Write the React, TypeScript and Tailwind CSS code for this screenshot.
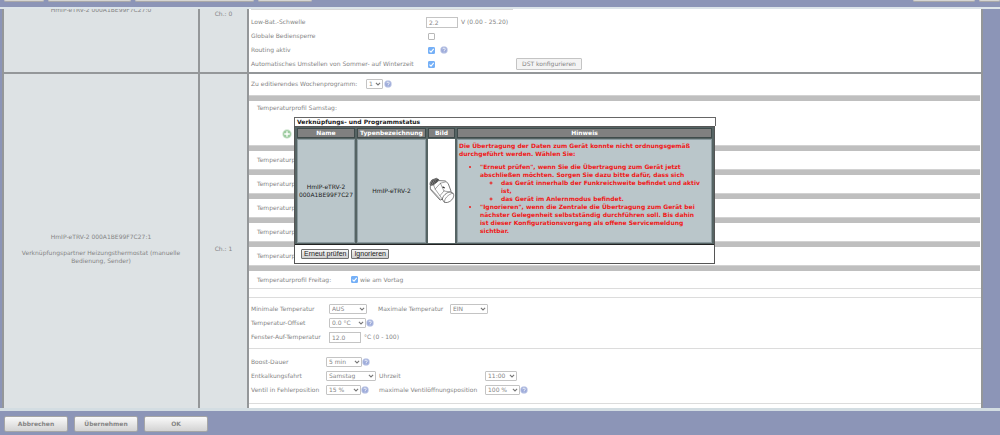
import type { ReactNode } from 'react';

function Help() {
  return (
    <svg viewBox="0 0 16 16" className="size-2 shrink-0" role="img" aria-label="Hilfe">
      <circle cx="8" cy="8" r="7.5" fill="#c3cbe8" />
      <circle cx="8" cy="8" r="5.8" fill="#9dabda" />
      <path d="M5.6 6.4a2.4 2.4 0 1 1 3.4 2.2c-.7.4-1 .7-1 1.4M8 11.4v1.4" fill="none" stroke="#fff" strokeWidth="1.7" />
    </svg>
  );
}

function Check({ id, on = false }: { id: string; on?: boolean }) {
  return (
    <span className="relative flex size-[7px] shrink-0">
      <input
        id={id}
        type="checkbox"
        defaultChecked={on}
        className="peer size-[7px] appearance-none rounded-[1px] border border-[#b8b8b8] bg-white checked:border-[#75b0f7] checked:bg-[#75b0f7]"
      />
      <svg viewBox="0 0 14 14" className="pointer-events-none absolute inset-0 hidden size-[7px] peer-checked:block" aria-hidden="true">
        <path d="M3 7.2l3 3 5.4-6.4" fill="none" stroke="#fff" strokeWidth="2.2" />
      </svg>
    </span>
  );
}

function Select({ id, label, value, width }: { id: string; label?: string; value: string; width: string }) {
  return (
    <span className={`relative flex shrink-0 ${width}`}>
      <select
        id={id}
        aria-label={label}
        defaultValue={value}
        className="h-[10px] w-full appearance-none rounded-[1px] border border-[#c4c4c4] bg-white pl-[2px] text-[6px] leading-[8px] text-[#858585]"
      >
        <option>{value}</option>
      </select>
      <svg viewBox="0 0 10 6" className="pointer-events-none absolute top-[3px] right-[2px] h-[4px] w-[6px]" aria-hidden="true">
        <path d="M1.5 1l3.5 3.5L8.5 1" fill="none" stroke="#777" strokeWidth="1.8" />
      </svg>
    </span>
  );
}

const inputStyle = 'h-[11px] w-8 shrink-0 border border-[#c4c4c4] bg-white pl-[2px] text-[6px] leading-[8px] text-[#858585]';

function Line({ children }: { children: ReactNode }) {
  return <div className="flex h-[14px] items-center">{children}</div>;
}

function Band() {
  return <div className="mr-px h-[6px] border-t border-[#d2d2d2] bg-[#bfbfbf]" />;
}

function Plus() {
  return (
    <button type="button" aria-label="Zeitabschnitt hinzufügen" className="flex">
      <svg viewBox="0 0 20 20" className="size-[10px]">
        <circle cx="10" cy="10" r="9.5" fill="#d3e6d3" />
        <circle cx="10" cy="10" r="7.6" fill="#9ccb9f" />
        <path d="M10 4.5v11M4.5 10h11" stroke="#fff" strokeWidth="2.6" />
      </svg>
    </button>
  );
}

const barButton =
  'h-4 w-16 rounded-[2px] border border-[#a6a6a6] bg-linear-to-b from-[#fafafa] to-[#d3d3d3] text-[6px] leading-[8px] font-bold text-[#858585]';
const topTab = 'h-[2px] rounded-b-[2px] border-b border-[#aaa9a9] bg-[#d6d6d3]';
const dialogButton =
  "h-[10px] rounded-[1px] border border-[#707070] bg-linear-to-b from-[#f4f4f4] to-[#cfcfcf] px-[2px] font-['Liberation_Sans',sans-serif] text-[7px] leading-[8px] text-[#222]";
const headCell = 'h-[10px] border border-[#3f4b4b] bg-[#808080] p-0 text-center font-bold text-white';
const bodyCell = 'border border-[#8b9a9f] bg-[#bac6ca] p-0 text-center';

function Dialog() {
  return (
    <section role="dialog" aria-labelledby="dlg-title" className="absolute top-[117px] left-[294px] w-[422px] text-[6px] leading-[8px] text-[#222]">
      <h2 id="dlg-title" className="border border-[#666] border-b-0 bg-white pl-[2px] font-bold">
        Verknüpfungs- und Programmstatus
      </h2>
      <div className="mr-px border border-[#555] bg-white">
        <table className="w-full table-fixed border-separate border-spacing-x-[2px] border-spacing-y-px border-b border-[#222] bg-[#566464]">
          <colgroup>
            <col className="w-[58px]" />
            <col className="w-[69px]" />
            <col className="w-[27px]" />
            <col />
          </colgroup>
          <thead>
            <tr>
              <th className={headCell}>Name</th>
              <th className={headCell}>Typenbezeichnung</th>
              <th className={headCell}>Bild</th>
              <th className={headCell}>Hinweis</th>
            </tr>
          </thead>
          <tbody>
            <tr>
              <td className={bodyCell}>
                HmIP-eTRV-2
                <br />
                000A1BE99F7C27
              </td>
              <td className={bodyCell}>HmIP-eTRV-2</td>
              <td className="bg-white p-0">
                <svg viewBox="10 16 80 84" className="mx-auto h-7 w-[26px]" role="img" aria-label="Heizkörperthermostat">
                  <g fill="#fff" stroke="#444" strokeWidth="2.2" strokeLinejoin="round" strokeLinecap="round">
                    <path d="M14 32l5-8 14-5 8 5-4 8-14 10-9-3z" fill="#888" />
                    <path d="M17 36l6-11M22 38l7-14M28 36l6-13M33 32l4-10" stroke="#333" />
                    <path d="M15 41l9-2 16-13 20 1 9 8 9 24-6 6-21 18-7 3-29-32z" />
                    <path d="M24 39l5 13 22 31M29 52l16-18 16-4M45 34l11 24 19 3M56 58L44 72" fill="none" strokeWidth="1.5" />
                    <path d="M17 53l27 29" fill="none" strokeWidth="1.5" />
                    <path d="M51 82c2-10 13-20 24-21l8 3c6 5 3 17-6 24-6 5-14 7-19 5z" />
                    <path d="M58 92c-3-9 12-25 25-27" fill="none" strokeWidth="1.6" />
                    <path d="M53 46l4 2" stroke="#333" strokeWidth="4" />
                  </g>
                </svg>
              </td>
              <td className="border border-[#8b9a9f] bg-[#bac6ca] py-[2px] pr-[8px] pl-px text-left font-bold text-[#f01818]">
                <p>Die Übertragung der Daten zum Gerät konnte nicht ordnungsgemäß durchgeführt werden. Wählen Sie:</p>
                <ul className="my-[5px] list-disc pl-[21px]">
                  <li>
                    "Erneut prüfen", wenn Sie die Übertragung zum Gerät jetzt abschließen möchten. Sorgen Sie dazu bitte dafür, dass sich
                    <ul className="list-[circle] pl-[21px]">
                      <li>das Gerät innerhalb der Funkreichweite befindet und aktiv ist,</li>
                      <li>das Gerät im Anlernmodus befindet.</li>
                    </ul>
                  </li>
                  <li>
                    "Ignorieren", wenn die Zentrale die Übertragung zum Gerät bei nächster Gelegenheit selbstständig durchführen soll. Bis dahin ist
                    dieser Konfigurationsvorgang als offene Servicemeldung sichtbar.
                  </li>
                </ul>
              </td>
            </tr>
          </tbody>
        </table>
        <div className="flex gap-[2px] px-[6px] pt-[4px] pb-[4px]">
          <button type="button" className={dialogButton}>Erneut prüfen</button>
          <button type="button" className={dialogButton}>Ignorieren</button>
        </div>
      </div>
    </section>
  );
}

const columns = 'grid grid-cols-[196px_49px_1fr]';
const infoCell = 'flex flex-col justify-center border-r-2 border-[#949799] bg-[#dde2e4] text-center';
const profiles = [1, 2, 3, 4, 5];

export default function App() {
  return (
    <div className="relative flex h-screen flex-col overflow-hidden bg-[#8c95b7] font-['DejaVu_Sans',Verdana,sans-serif] text-[6px] leading-[8px] text-[#858585]">
      <header className="flex h-[7px] shrink-0 items-start gap-1 pl-1">
        <div className={`${topTab} w-10`} />
        <div className={`${topTab} w-[83px]`} />
        <div className={`${topTab} w-[119px]`} />
        <div className={`${topTab} w-[54px]`} />
        <div className={`${topTab} ml-auto w-[62px]`} />
        <div className={`${topTab} w-[21px]`} />
      </header>

      <main className="min-h-0 flex-1 overflow-hidden border-t-2 border-[#dce4e9]">
        <div className="-mt-[53px] mr-[17px] ml-[2px] border-x-2 border-[#949799] bg-white">
          <div className={`${columns} h-[118px] border-b-2 border-[#949799]`}>
            <div className={infoCell}>
              <p>HmIP-eTRV-2 000A1BE99F7C27:0</p>
              <p>&nbsp;</p>
            </div>
            <div className={infoCell}>Ch.: 0</div>
            <div className="flex flex-col justify-end pb-px pl-[2px]">
              <div className="mb-[5px] w-[262px] border-t border-[#d8d8d8]" />
              <Line>
                <label htmlFor="lowbat" className="w-[175px]">Low-Bat.-Schwelle</label>
                <input id="lowbat" defaultValue="2.2" className={inputStyle} />
                <span className="ml-[3px]">V (0.00 - 25.20)</span>
              </Line>
              <Line>
                <label htmlFor="lock" className="w-[177px]">Globale Bediensperre</label>
                <Check id="lock" />
              </Line>
              <Line>
                <label htmlFor="routing" className="w-[177px]">Routing aktiv</label>
                <Check id="routing" on />
                <span className="ml-[5px]"><Help /></span>
              </Line>
              <Line>
                <label htmlFor="dst" className="w-[177px] whitespace-nowrap">Automatisches Umstellen von Sommer- auf Winterzeit</label>
                <Check id="dst" on />
                <button type="button" className="ml-[81px] h-[12px] w-[66px] rounded-[1px] border border-[#c4c4c4] bg-[#f4f4f4]">
                  DST konfigurieren
                </button>
              </Line>
            </div>
          </div>

          <div className={`${columns} h-[350px]`}>
            <div className={infoCell}>
              <p>HmIP-eTRV-2 000A1BE99F7C27:1</p>
              <p>&nbsp;</p>
              <p className="px-3">Verknüpfungspartner Heizungsthermostat (manuelle Bedienung, Sender)</p>
            </div>
            <div className={infoCell}>Ch.: 1</div>
            <div>
              <div className="flex h-[21px] items-center pb-[2px] pl-[2px]">
                <label htmlFor="week" className="w-[115px]">Zu editierendes Wochenprogramm:</label>
                <Select id="week" value="1" width="w-[17px]" />
                <span className="ml-px"><Help /></span>
              </div>
              <Band />
              <div className="h-[44px] pt-[3px] pl-2">
                <p>Temperaturprofil Samstag:</p>
                <div className="pt-[17px] pl-[25px]"><Plus /></div>
              </div>
              {profiles.map((n) => (
                <div key={n}>
                  <Band />
                  <p className="flex h-[18px] items-center pl-2">Temperaturprofil</p>
                </div>
              ))}
              <Band />
              <div className="flex h-[18px] items-center border-b border-[#dcdcdc] pl-2">
                <span className="w-[94px]">Temperaturprofil Freitag:</span>
                <Check id="vortag" on />
                <label htmlFor="vortag" className="ml-[2px]">wie am Vortag</label>
              </div>
              <div className="h-[9px] border-b border-[#dcdcdc]" />
              <div className="border-b border-[#dcdcdc] pt-1 pb-[4px] pl-[2px]">
                <Line>
                  <label htmlFor="tmin" className="w-[78px]">Minimale Temperatur</label>
                  <Select id="tmin" value="AUS" width="w-[38px]" />
                  <label htmlFor="tmax" className="ml-[11px] w-[72px]">Maximale Temperatur</label>
                  <Select id="tmax" value="EIN" width="w-[38px]" />
                </Line>
                <Line>
                  <label htmlFor="offset" className="w-[78px]">Temperatur-Offset</label>
                  <Select id="offset" value="0.0 °C" width="w-[37px]" />
                  <Help />
                </Line>
                <Line>
                  <label htmlFor="window" className="w-[78px]">Fenster-Auf-Temperatur</label>
                  <input id="window" defaultValue="12.0" className={inputStyle} />
                  <span className="ml-[3px]">°C (0 - 100)</span>
                </Line>
              </div>
              <div className="border-b border-[#dcdcdc] pt-[6px] pb-[6px] pl-[2px]">
                <Line>
                  <label htmlFor="boost" className="w-[75px]">Boost-Dauer</label>
                  <Select id="boost" value="5 min" width="w-[36px]" />
                  <Help />
                </Line>
                <Line>
                  <label htmlFor="descale" className="w-[75px]">Entkalkungsfahrt</label>
                  <span className="w-[53px]"><Select id="descale" value="Samstag" width="w-[50px]" /></span>
                  <label htmlFor="time" className="w-[106px]">Uhrzeit</label>
                  <Select id="time" value="11:00" width="w-[32px]" />
                </Line>
                <Line>
                  <label htmlFor="valve" className="w-[75px]">Ventil in Fehlerposition</label>
                  <span className="flex w-[53px] items-center">
                    <Select id="valve" value="15 %" width="w-[35px]" />
                    <Help />
                  </span>
                  <label htmlFor="valvemax" className="w-[106px]">maximale Ventilöffnungsposition</label>
                  <Select id="valvemax" value="100 %" width="w-[35px]" />
                  <Help />
                </Line>
              </div>
            </div>
          </div>
        </div>
      </main>

      <footer className="flex h-[27px] shrink-0 items-start gap-[6px] border-t-[3px] border-[#d3dde2] pt-[5px] pl-[4px]">
        <button type="button" className={barButton}>Abbrechen</button>
        <button type="button" className={barButton}>Übernehmen</button>
        <button type="button" className={barButton}>OK</button>
      </footer>

      <Dialog />
    </div>
  );
}
